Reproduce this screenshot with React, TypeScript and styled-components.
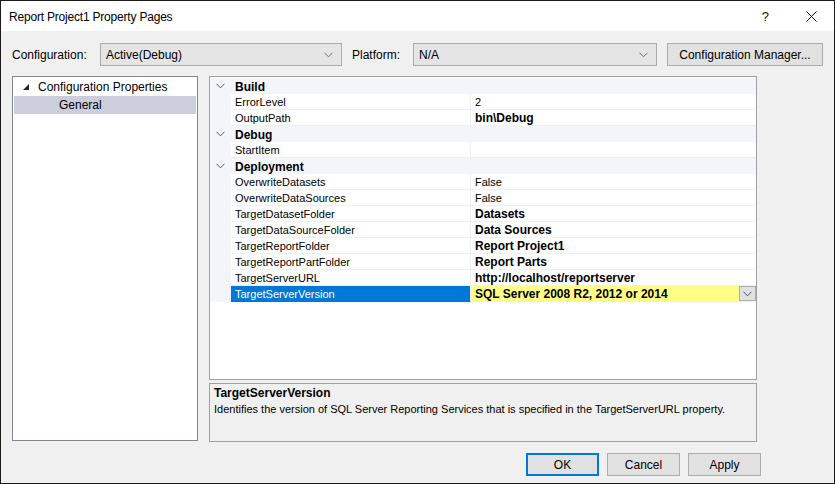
import React, { FC } from "react";
import styled, { createGlobalStyle } from "styled-components";

const GlobalStyle = createGlobalStyle`
  html, body {
    margin: 0;
    padding: 0;
    background: #f0f0f0;
  }
  * {
    box-sizing: border-box;
  }
`;

interface Property {
  name: string;
  value?: string;
  bold?: boolean;
  selected?: boolean;
}

interface Category {
  title: string;
  items: Property[];
}

const categories: Category[] = [
  {
    title: "Build",
    items: [
      { name: "ErrorLevel", value: "2" },
      { name: "OutputPath", value: "bin\\Debug", bold: true },
    ],
  },
  {
    title: "Debug",
    items: [{ name: "StartItem", value: "" }],
  },
  {
    title: "Deployment",
    items: [
      { name: "OverwriteDatasets", value: "False" },
      { name: "OverwriteDataSources", value: "False" },
      { name: "TargetDatasetFolder", value: "Datasets", bold: true },
      { name: "TargetDataSourceFolder", value: "Data Sources", bold: true },
      { name: "TargetReportFolder", value: "Report Project1", bold: true },
      { name: "TargetReportPartFolder", value: "Report Parts", bold: true },
      { name: "TargetServerURL", value: "http://localhost/reportserver", bold: true },
      {
        name: "TargetServerVersion",
        value: "SQL Server 2008 R2, 2012 or 2014",
        bold: true,
        selected: true,
      },
    ],
  },
];

const Chevron: FC<{ color?: string }> = ({ color = "#606060" }) => (
  <svg width="9" height="6" viewBox="0 0 9 6">
    <polyline points="0.5,0.8 4.5,4.8 8.5,0.8" fill="none" stroke={color} strokeWidth="1" />
  </svg>
);

const App: FC = () => {
  return (
    <>
      <GlobalStyle />
      <Window>
        <TitleBar>
          <TitleText>Report Project1 Property Pages</TitleText>
          <TitleButtons>
            <HelpGlyph>?</HelpGlyph>
            <svg width="11" height="11" viewBox="0 0 11 11">
              <line x1="0.5" y1="0.5" x2="10.5" y2="10.5" stroke="#111" strokeWidth="1" />
              <line x1="10.5" y1="0.5" x2="0.5" y2="10.5" stroke="#111" strokeWidth="1" />
            </svg>
          </TitleButtons>
        </TitleBar>

        <Body>
          <ConfigRow>
            <FieldLabel width={88}>Configuration:</FieldLabel>
            <Combo width={242}>
              <span>Active(Debug)</span>
              <Chevron color="#707070" />
            </Combo>
            <FieldLabel width={61} gap={10}>
              Platform:
            </FieldLabel>
            <Combo width={244}>
              <span>N/A</span>
              <Chevron color="#707070" />
            </Combo>
            <Button width={156} gap={10}>
              Configuration Manager...
            </Button>
          </ConfigRow>

          <Panels>
            <TreePanel>
              <TreeRow>
                <svg width="6" height="6" viewBox="0 0 6 6">
                  <polygon points="6,0 6,6 0,6" fill="#262626" />
                </svg>
                <span>Configuration Properties</span>
              </TreeRow>
              <TreeRow selected indent={45}>
                <span>General</span>
              </TreeRow>
            </TreePanel>

            <RightColumn>
              <Grid>
                {categories.map((cat) => (
                  <React.Fragment key={cat.title}>
                    <CategoryRow>
                      <Gutter>
                        <Chevron color="#555" />
                      </Gutter>
                      <CategoryTitle>{cat.title}</CategoryTitle>
                    </CategoryRow>
                    {cat.items.map((item) => (
                      <PropRow key={item.name}>
                        <Gutter />
                        <NameCell selected={item.selected}>{item.name}</NameCell>
                        <ValueCell bold={item.bold} selected={item.selected}>
                          <span>{item.value}</span>
                          {item.selected && (
                            <DropButton>
                              <Chevron color="#505050" />
                            </DropButton>
                          )}
                        </ValueCell>
                      </PropRow>
                    ))}
                  </React.Fragment>
                ))}
              </Grid>

              <Description>
                <DescTitle>TargetServerVersion</DescTitle>
                <DescText>
                  Identifies the version of SQL Server Reporting Services that is specified in the
                  TargetServerURL property.
                </DescText>
              </Description>
            </RightColumn>
          </Panels>

          <Footer>
            <Button width={73} primary>
              OK
            </Button>
            <Button width={73}>Cancel</Button>
            <Button width={73}>Apply</Button>
          </Footer>
        </Body>
      </Window>
    </>
  );
};

export default App;

const Window = styled.div`
  width: 835px;
  height: 484px;
  border: 1px solid #1a1a1a;
  background: #f0f0f0;
  font-family: "Liberation Sans", Arial, sans-serif;
  font-size: 12px;
  color: #000;
  display: flex;
  flex-direction: column;
  overflow: hidden;
`;

const TitleBar = styled.div`
  height: 30px;
  background: #fff;
  display: flex;
  align-items: center;
  justify-content: space-between;
  padding: 0 17px 0 8px;
  flex-shrink: 0;
`;

const TitleText = styled.div`
  font-size: 12px;
  letter-spacing: -0.2px;
  padding-top: 1px;
`;

const TitleButtons = styled.div`
  display: flex;
  align-items: center;
  gap: 37px;
`;

const HelpGlyph = styled.span`
  font-size: 13px;
  color: #111;
`;

const Body = styled.div`
  flex: 1;
  display: flex;
  flex-direction: column;
  padding: 12px 0 0 11px;
`;

const ConfigRow = styled.div`
  display: flex;
  align-items: center;
  height: 23px;
`;

const FieldLabel = styled.div<{ width: number; gap?: number }>`
  width: ${(p) => p.width}px;
  margin-left: ${(p) => p.gap ?? 0}px;
  flex-shrink: 0;
`;

const Combo = styled.div<{ width: number }>`
  width: ${(p) => p.width}px;
  height: 23px;
  flex-shrink: 0;
  background: #e5e5e5;
  border: 1px solid #acacac;
  display: flex;
  align-items: center;
  justify-content: space-between;
  padding: 0 8px 0 5px;
`;

const Button = styled.div<{ width: number; gap?: number; primary?: boolean }>`
  width: ${(p) => p.width}px;
  height: 23px;
  margin-left: ${(p) => p.gap ?? 0}px;
  flex-shrink: 0;
  background: #e1e1e1;
  border: 1px solid ${(p) => (p.primary ? "#0078d7" : "#adadad")};
  box-shadow: ${(p) => (p.primary ? "inset 0 0 0 1px #0078d7" : "none")};
  display: flex;
  align-items: center;
  justify-content: center;
`;

const Panels = styled.div`
  display: flex;
  gap: 11px;
  margin-top: 10px;
  height: 366px;
`;

const TreePanel = styled.div`
  width: 186px;
  height: 365px;
  background: #fff;
  border: 1px solid #828790;
  padding: 1px;
`;

const TreeRow = styled.div<{ selected?: boolean; indent?: number }>`
  height: 18px;
  display: flex;
  align-items: center;
  gap: 9px;
  padding-left: ${(p) => p.indent ?? 9}px;
  background: ${(p) => (p.selected ? "#cccedb" : "transparent")};
`;

const RightColumn = styled.div`
  width: 548px;
  display: flex;
  flex-direction: column;
  gap: 3px;
`;

const Grid = styled.div`
  height: 304px;
  background: #fff;
  border: 1px solid #a0a0a0;
  padding-top: 1px;
  font-size: 11px;
`;

const rowBase = `
  height: 16px;
  display: grid;
  grid-template-columns: 21px 240px 1fr;
  align-items: stretch;
`;

const CategoryRow = styled.div`
  ${rowBase}
  background: #f3f5fa;
`;

const PropRow = styled.div`
  ${rowBase}
`;

const Gutter = styled.div`
  background: #f3f5fa;
  display: flex;
  align-items: center;
  justify-content: center;
  padding-right: 1px;
`;

const CategoryTitle = styled.div`
  grid-column: 2 / 4;
  font-weight: bold;
  font-size: 12px;
  display: flex;
  align-items: center;
  padding-left: 4px;
  padding-top: 1px;
`;

const NameCell = styled.div<{ selected?: boolean }>`
  display: flex;
  align-items: center;
  padding-left: 4px;
  padding-top: 1px;
  border-bottom: 1px solid ${(p) => (p.selected ? "#0078d7" : "#f0f0f0")};
  border-right: 1px solid #f0f0f0;
  background: ${(p) => (p.selected ? "#0078d7" : "#fff")};
  color: ${(p) => (p.selected ? "#fff" : "#000")};
`;

const ValueCell = styled.div<{ bold?: boolean; selected?: boolean }>`
  display: flex;
  align-items: center;
  justify-content: space-between;
  padding-left: 4px;
  padding-top: 1px;
  border-bottom: 1px solid #f0f0f0;
  background: ${(p) => (p.selected ? "#ffff88" : "#fff")};
  font-weight: ${(p) => (p.bold ? "bold" : "normal")};
  font-size: ${(p) => (p.bold ? "12px" : "11px")};
`;

const DropButton = styled.div`
  width: 17px;
  height: 15px;
  margin-top: -1px;
  background: #e1e1e1;
  border: 1px solid #adadad;
  display: flex;
  align-items: center;
  justify-content: center;
`;

const Description = styled.div`
  height: 59px;
  border: 1px solid #a0a0a0;
  background: #f0f0f0;
  padding: 2px 4px;
`;

const DescTitle = styled.div`
  font-weight: bold;
  font-size: 12px;
  line-height: 15px;
`;

const DescText = styled.div`
  font-size: 11px;
  line-height: 16px;
`;

const Footer = styled.div`
  display: flex;
  justify-content: flex-end;
  gap: 8px;
  margin-top: 11px;
  padding-right: 73px;
`;
